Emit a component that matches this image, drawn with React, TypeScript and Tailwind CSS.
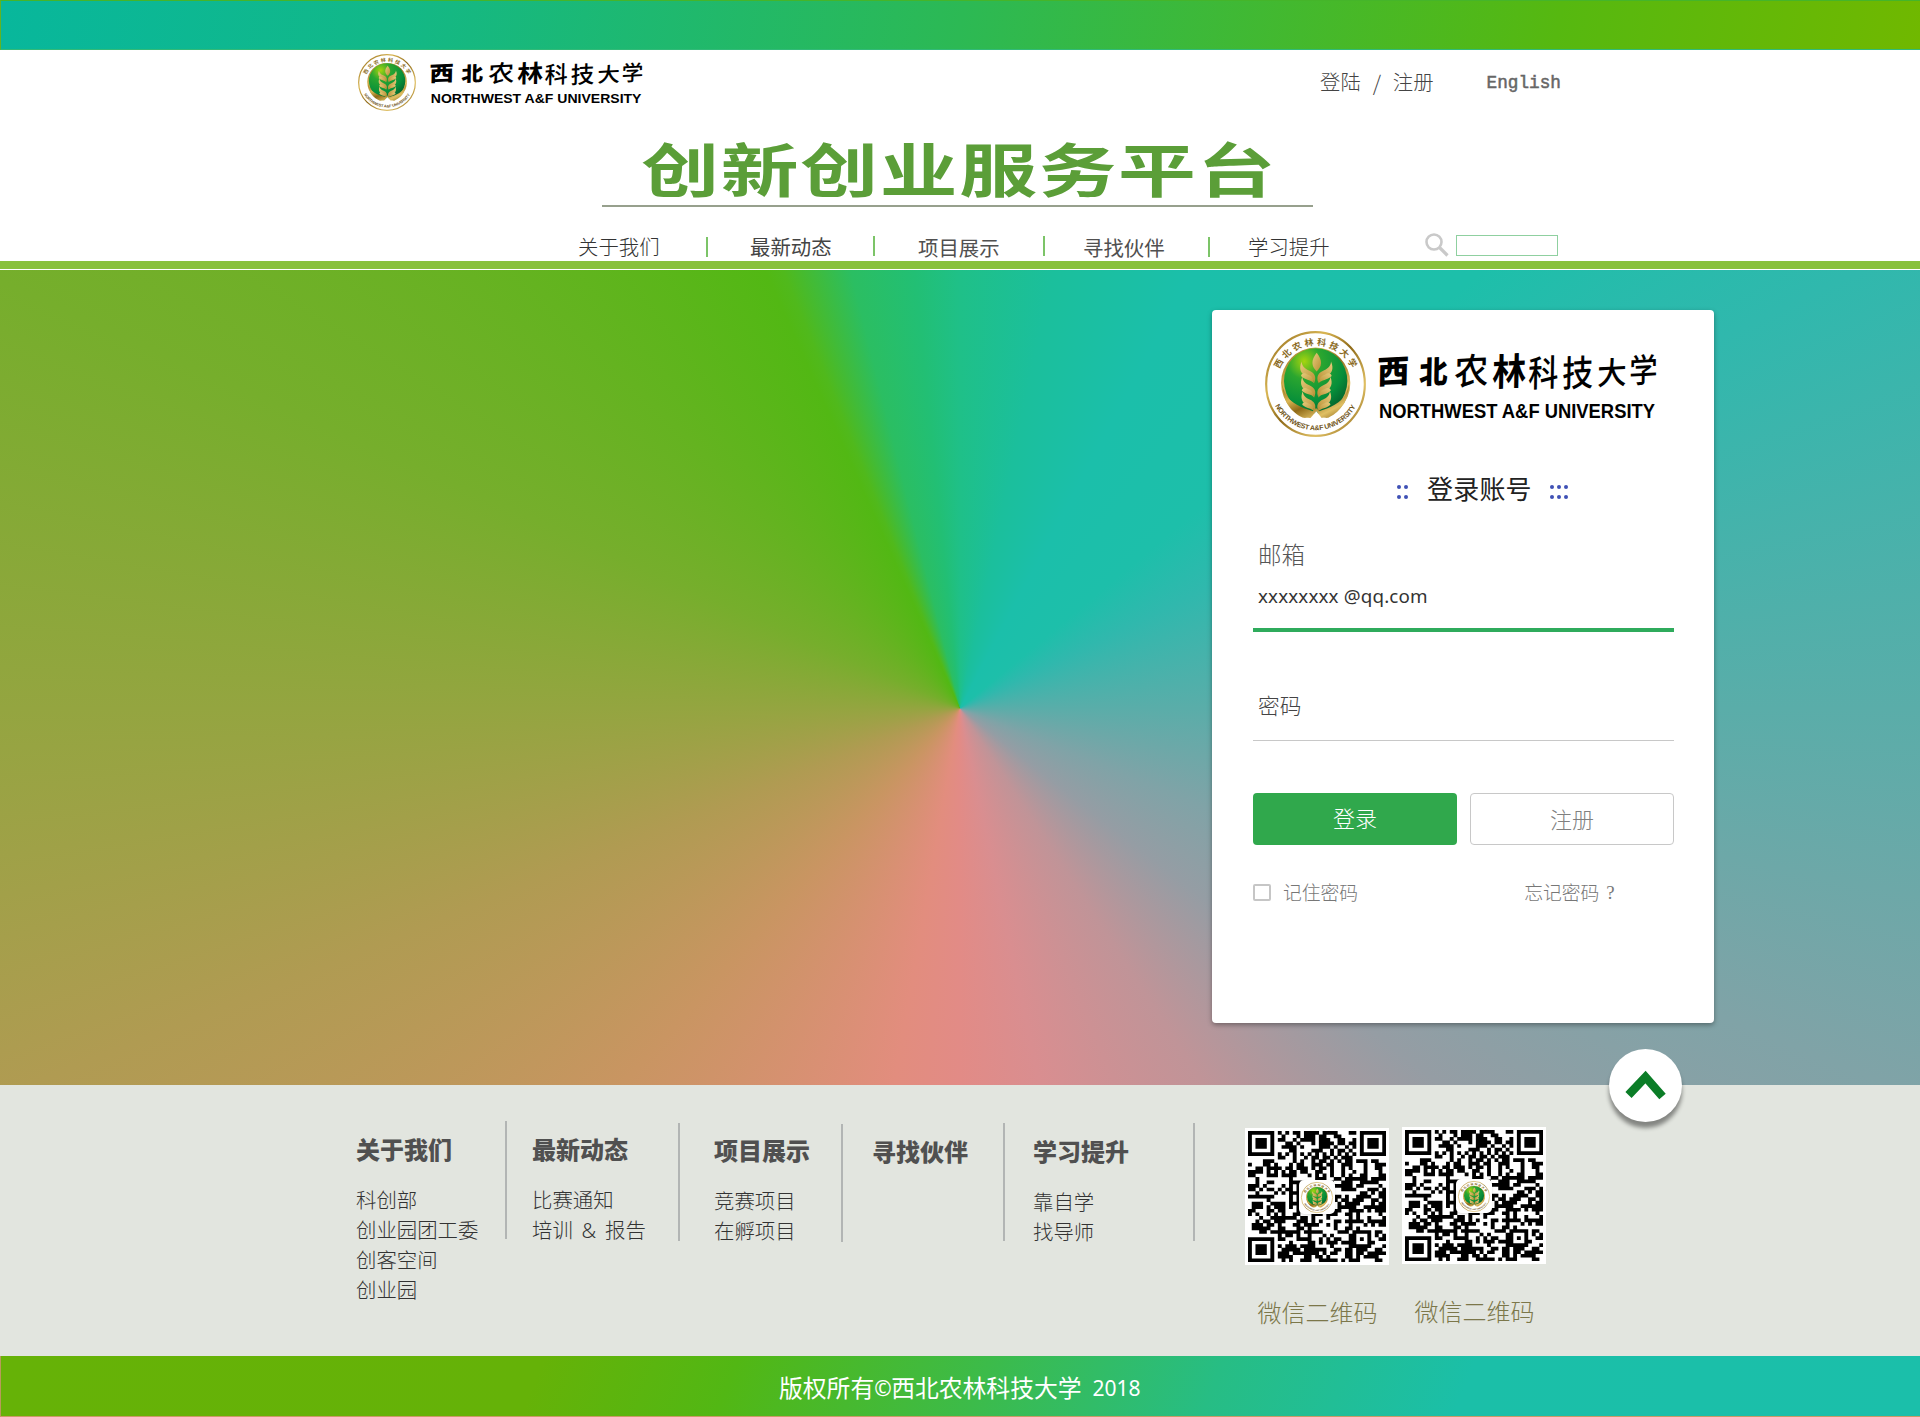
import React from "react";

const CJK = "font-['Noto_Sans','Noto_Sans_CJK_SC',sans-serif]";

/* ---------- Emblem ---------- */

function Leaf({ y, s }: { y: number; s: number }) {
  return (
    <g transform={`translate(168 ${y}) scale(${s})`}>
      <path d="M-44 0 C-54 22 -46 40 -28 44 C-14 47 -8 54 -7 66 C2 46 -6 34 -22 27 C-36 21 -44 12 -44 0Z" />
      <path d="M-46 44 C-44 34 -34 34 -26 40 C-12 44 -8 54 -7 66 C-16 54 -32 58 -46 44Z" />
    </g>
  );
}

function Emblem({ id, className }: { id: string; className: string }) {
  return (
    <svg className={`overflow-visible ${className}`} viewBox="14 20 303 320" preserveAspectRatio="none">
      <defs>
        <linearGradient id={`${id}-gold`} x1="0" y1="0" x2="1" y2="1">
          <stop offset="0" stopColor="#8a6414" />
          <stop offset="0.3" stopColor="#d9b654" />
          <stop offset="0.5" stopColor="#8f6a18" />
          <stop offset="0.75" stopColor="#e0c064" />
          <stop offset="1" stopColor="#80590d" />
        </linearGradient>
        <linearGradient id={`${id}-leaf`} x1="0" y1="0" x2="1" y2="1">
          <stop offset="0" stopColor="#e6cc7c" />
          <stop offset="1" stopColor="#b98e34" />
        </linearGradient>
        <radialGradient id={`${id}-green`} cx="0.32" cy="0.2" r="0.9">
          <stop offset="0" stopColor="#a5d40f" />
          <stop offset="0.3" stopColor="#2ba62f" />
          <stop offset="0.7" stopColor="#078f3a" />
          <stop offset="1" stopColor="#04592a" />
        </radialGradient>
        <path id={`${id}-top`} d="M57 136 A118 118 0 0 1 275 136" />
        <path id={`${id}-bottom`} d="M43 243 A138 140 0 0 0 289 243" />
      </defs>
      <ellipse cx="165.5" cy="180" rx="148" ry="156.500" fill="#fff" stroke={`url(#${id}-gold)`} strokeWidth="6.500" />
      <ellipse cx="166" cy="177" rx="104" ry="107" fill={`url(#${id}-gold)`} />
      <ellipse cx="166" cy="171" rx="95" ry="99" fill={`url(#${id}-green)`} />
      <path d="M66 180 C72 224 100 240 134 254 L158 262 C166 250 168 250 176 262 L200 254 C232 240 260 224 266 180 C264 240 232 268 204 282 C190 284 178 276 168 262 C158 276 146 284 128 282 C96 266 68 240 66 180Z" fill={`url(#${id}-gold)`} />
      <path d="M144 290 L168 262 L190 290Z" fill="#fff" />
      <g fill={`url(#${id}-leaf)`}>
        <path d="M169 86 C187 110 186 126 169 142 C152 126 152 108 169 86Z" />
        <Leaf y={112} s={1} />
        <Leaf y={158} s={0.95} />
        <Leaf y={202} s={0.92} />
        <g transform="translate(336 0) scale(-1 1)">
          <Leaf y={112} s={1} />
          <Leaf y={158} s={0.95} />
          <Leaf y={202} s={0.92} />
        </g>
      </g>
      <text className="font-['Noto_Sans_CJK_SC',sans-serif] font-bold" fontSize="27" fill="#8a6a22">
        <textPath href={`#${id}-top`} startOffset="1" textLength="274">西北农林科技大学</textPath>
      </text>
      <text className="font-['Liberation_Sans',sans-serif] font-bold" fontSize="21" fill="#6f5418">
        <textPath href={`#${id}-bottom`} startOffset="3" textLength="296">NORTHWEST A&amp;F UNIVERSITY</textPath>
      </text>
    </svg>
  );
}

/* ---------- University word mark ---------- */

function WordMark({ className }: { className: string }) {
  const chars: [string, number, number, number, number, number][] = [
    ["西", 0, 32, 32, 900, 1],
    ["北", 42, 32, 31, 900, 0.92],
    ["农", 77, 33, 36, 500, 0.95],
    ["林", 115, 34, 37, 700, 0.92],
    ["科", 151, 35, 36, 500, 0.84],
    ["技", 185, 35, 36, 500, 0.86],
    ["大", 220, 33, 31, 500, 0.95],
    ["学", 252, 31, 33, 500, 0.86],
  ];
  return (
    <svg className={`overflow-visible ${className}`} viewBox="0 0 279 70" preserveAspectRatio="none">
      <g className="font-['Noto_Sans_CJK_SC',sans-serif]" fill="#000">
        {chars.map(([c, x, y, size, weight, sx]) => (
          <text key={c} x={0} y={0} transform={`translate(${x - 1} ${y}) rotate(-3) skewX(-4) scale(${sx} 1)`} fontSize={size} fontWeight={weight}>
            {c}
          </text>
        ))}
      </g>
      <text x="1" y="66" className="font-['Liberation_Sans',sans-serif] font-bold" fontSize="20.500" textLength="276" lengthAdjust="spacingAndGlyphs">
        NORTHWEST A&amp;F UNIVERSITY
      </text>
    </svg>
  );
}

/* ---------- QR code ---------- */

const SIZE = 37;

function buildCode(): string {
  let seed = 20187;
  const rand = () => {
    seed = (seed * 1103515245 + 12345) % 2147483648;
    return seed / 2147483648;
  };
  const ring = (r: number, c: number, n: number) => {
    const d = Math.max(Math.abs(r), Math.abs(c));
    return d <= n ? (n === 3 ? d !== 2 : d !== 1) : false;
  };
  let d = "";
  for (let r = 0; r < SIZE; r++) {
    for (let c = 0; c < SIZE; c++) {
      let on = rand() < 0.53;
      if (r < 8 && c < 8) on = ring(r - 3, c - 3, 3);
      else if (r < 8 && c > 28) on = ring(r - 3, c - 33, 3);
      else if (r > 28 && c < 8) on = ring(r - 33, c - 3, 3);
      else if (Math.abs(r - 30) < 3 && Math.abs(c - 30) < 3) on = ring(r - 30, c - 30, 2);
      else if (r === 6) on = c % 2 === 0;
      else if (c === 6) on = r % 2 === 0;
      if (on) d += `M${c} ${r}h1.04v1.04h-1.04z`;
    }
  }
  return d;
}

const CODE = buildCode();

function QrCard({ id, className }: { id: string; className: string }) {
  return (
    <div className={`flex flex-col items-center ${className}`}>
      <div className="relative h-[137px] w-[144px] bg-white pt-[3px] pl-[3px]">
        <svg className="h-[131px] w-[138px]" viewBox="0 0 37 37" preserveAspectRatio="none">
          <path d={CODE} fill="#000" />
        </svg>
        <div className="absolute top-[52px] left-[54px] flex h-[34px] w-[36px] items-center justify-center rounded-[5px] bg-white shadow-sm">
          <Emblem id={id} className="h-[31px] w-[32px]" />
        </div>
      </div>
      <p className={`${CJK} mt-[31px] ml-px text-[24px] leading-[34px] font-light text-[#7c774a]`}>微信二维码</p>
    </div>
  );
}

/* ---------- Header ---------- */

const NAV = [
  { label: "关于我们", cls: "w-[128px]", sep: "mt-[5px]", weight: "font-light text-[#333]" },
  { label: "最新动态", cls: "w-[123px]", sep: "mt-[4px]", weight: "font-normal text-[#444]" },
  { label: "项目展示", cls: "w-[125px] pt-px", sep: "mt-[4px]", weight: "font-normal text-[#505050]" },
  { label: "寻找伙伴", cls: "w-[125px] pt-px", sep: "mt-[5px]", weight: "font-normal text-[#505050]" },
  { label: "学习提升", cls: "w-[100px]", sep: "", weight: "font-light text-[#333]" },
];

const NAV_GAPS = ["ml-[578px]", "ml-[42px]", "ml-[43px]", "ml-[38px]", "ml-[38px]"];

function Header() {
  return (
    <header className="flex h-[220px] flex-col bg-white">
      <div className="flex h-[77px] items-start">
        <Emblem id="head" className="mt-[4px] ml-[358px] h-[57px] w-[58px]" />
        <WordMark className="mt-[11px] ml-[14px] h-[45px] w-[213px]" />
        <div className={`${CJK} mt-[17px] ml-[677px] flex items-center text-[20.400px] leading-[30px] font-light text-[#444]`}>
          <a>登陆</a>
          <span className="mx-[10px] w-[12px] text-center font-['Noto_Sans_CJK_SC',sans-serif] text-[21px]">/</span>
          <a>注册</a>
        </div>
        <a className="mt-[18px] ml-[53px] font-['Liberation_Mono',monospace] text-[17.700px] leading-[30px] text-[#666] [-webkit-text-stroke:0.5px_#666]">English</a>
      </div>
      <div className="ml-[602px] flex h-[80px] w-[711px] justify-center border-b-2 border-[#97a08d]">
        <h1 className="-mt-px ml-[4px] origin-center scale-x-[1.34] text-center font-['Noto_Sans_CJK_SC',sans-serif] text-[58px] leading-[82px] font-bold whitespace-nowrap text-[#5b9e38] tracking-[1.300px]">
          创新创业服务平台
        </h1>
      </div>
      <nav className="flex h-[54px] items-start pt-[25px]">
        {NAV.map((n, i) => (
          <React.Fragment key={n.label}>
            <div className={`flex items-center ${NAV_GAPS[i]} ${n.cls}`}>
              <a className={`${CJK} text-[20.400px] leading-[30px] ${n.weight}`}>{n.label}</a>
            </div>
            {n.sep && <i className={`h-[20px] w-[2px] bg-[#7cc468] ${n.sep}`} />}
          </React.Fragment>
        ))}
        <svg className="mt-px ml-[77px] h-[24px] w-[24px]" viewBox="0 0 24 24" fill="none" stroke="#c9c9c9">
          <circle cx="9" cy="9" r="7.500" strokeWidth="2.600" />
          <path d="M14.500 14.500L22.500 22.500" strokeWidth="3.200" />
        </svg>
        <input className="mt-[3px] ml-[7px] h-[21px] w-[102px] border border-[#8fd0a0] bg-white outline-none" />
      </nav>
      <div className="h-[8px] bg-[#89c13c]" />
      <div className="h-px bg-white" />
    </header>
  );
}

/* ---------- Login card ---------- */

function Dots({ cols, className }: { cols: number; className: string }) {
  return (
    <span className={`grid gap-x-[3px] gap-y-[6px] ${cols === 2 ? "grid-cols-2" : "grid-cols-3"} ${className}`}>
      {Array.from({ length: cols * 2 }, (_, i) => (
        <i key={i} className="h-[4px] w-[4px] rounded-full bg-[#3f51b5]" />
      ))}
    </span>
  );
}

function LoginCard() {
  return (
    <section className="flex h-[713px] w-[502px] flex-col rounded-[4px] bg-white pr-[40px] pb-4 pl-[41px] shadow-[0_2px_5px_rgba(0,0,0,0.35)]">
      <div className="mt-[21px] ml-[12px] flex">
        <Emblem id="card" className="h-[106px] w-[101px]" />
        <WordMark className="mt-[21px] ml-[12px] h-[70px] w-[279px]" />
      </div>
      <div className="mt-[33px] ml-[144px] flex h-[38px] items-center">
        <Dots cols={2} className="mt-[6px] w-[11px]" />
        <h2 className={`${CJK} mr-[18px] ml-[19px] text-[26px] leading-[38px] tracking-[0.200px] text-[#222]`}>登录账号</h2>
        <Dots cols={3} className="mt-[6px] w-[18px]" />
      </div>
      <label className={`${CJK} mt-[30px] ml-[5px] text-[23.500px] leading-[34px] font-light text-[#555]`}>邮箱</label>
      <div className="mt-[11px] flex h-[49px] items-start border-b-4 border-[#2fab5c] pl-[5px]">
        <span className="font-['Noto_Sans',sans-serif] text-[18.800px] leading-[26px] tracking-[0.150px] text-[#333]">xxxxxxxx @qq.com</span>
      </div>
      <div className="mt-[58px] flex h-[51px] items-start border-b border-[#c8c8c8] pl-[5px]">
        <span className={`${CJK} text-[21.700px] leading-[32px] font-light text-[#444]`}>密码</span>
      </div>
      <div className={`${CJK} mt-[52px] flex gap-[13px] text-[22px] font-light`}>
        <button className="h-[52px] w-[204px] rounded-[4px] bg-[#30a84c] pb-px text-white">登录</button>
        <button className="h-[52px] w-[204px] rounded-[4px] border border-[#c8c8c8] text-[#808080]">注册</button>
      </div>
      <div className={`${CJK} mt-[34px] flex items-center text-[18.800px] leading-[28px] font-light text-[#777]`}>
        <i className="-mt-[2px] h-[17px] w-[18px] rounded-[2px] border-2 border-[#c6c6c6]" />
        <span className="ml-[12px]">记住密码</span>
        <span className="ml-[166px]">忘记密码</span>
        <span className="ml-[7px] font-['Liberation_Serif',serif] font-normal">?</span>
      </div>
    </section>
  );
}

/* ---------- Footer ---------- */

const COLUMNS = [
  { title: "关于我们", items: ["科创部", "创业园团工委", "创客空间", "创业园"], cls: "w-[149px] pt-[50px]", sep: "mt-[36px]", gap: "ml-[356px]" },
  { title: "最新动态", items: ["比赛通知", "培训 & 报告"], cls: "w-[146px] pt-[50px]", sep: "mt-[38px]", gap: "ml-[25px]" },
  { title: "项目展示", items: ["竞赛项目", "在孵项目"], cls: "w-[127px] pt-[51px]", sep: "mt-[39px]", gap: "ml-[34px]" },
  { title: "寻找伙伴", items: [], cls: "w-[131px] pt-[52px]", sep: "mt-[38px]", gap: "ml-[29px]" },
  { title: "学习提升", items: ["靠自学", "找导师"], cls: "w-[160px] pt-[52px]", sep: "mt-[38px]", gap: "ml-[28px]" },
];

function Footer() {
  return (
    <footer className="relative h-[271px] bg-[#e2e5df]">
      <button className="absolute -top-[36px] left-[1609px] flex h-[73px] w-[73px] items-center justify-center rounded-full bg-white shadow-[0_6px_4px_rgba(0,0,0,0.42)]">
        <svg className="-mt-px h-[30px] w-[42px]" viewBox="0 0 42 30" fill="none" stroke="#0b7d27" strokeWidth="8.500">
          <path d="M3.500 25L20.500 7L37.500 26.500" />
        </svg>
      </button>
      <div className="flex items-start">
        {COLUMNS.map((c) => (
          <React.Fragment key={c.title}>
            <div className={`${CJK} ${c.gap} ${c.cls} shrink-0 whitespace-nowrap`}>
              <h3 className="text-[24px] leading-[30px] font-black text-[#505050]">{c.title}</h3>
              <ul className="mt-[20px] text-[20.400px] leading-[30px] font-light text-[#333]">
                {c.items.map((t) => (
                  <li key={t} className="[word-spacing:3.5px]">{t}</li>
                ))}
              </ul>
            </div>
            <i className={`h-[118px] w-[2px] shrink-0 bg-[#b2b5b4] ${c.sep}`} />
          </React.Fragment>
        ))}
        <QrCard id="qra" className="mt-[43px] ml-[50px]" />
        <QrCard id="qrb" className="mt-[42px] ml-[13px]" />
      </div>
    </footer>
  );
}

export default function App() {
  return (
    <div className="w-[1920px] overflow-hidden bg-white">
      <div className="h-[50px] border border-r-0 border-t-[#45b52a] border-b-[#32ba78] border-l-[#62b322] bg-[linear-gradient(100deg,#08b79c_0%,#12b888_20%,#2cb954_50%,#56b810_81%,#70b800_100%)]" />
      <Header />
      <main className="flex h-[815px] items-start bg-[conic-gradient(from_0deg_at_960px_438.5px,#1fc088_0deg,#1bbf9c_12deg,#1bbfaa_28deg,#1dbfaa_50deg,#30b8ad_64deg,#5aada9_90deg,#80a3a7_112deg,#959da4_128deg,#c09498_147deg,#d98e90_168deg,#e28b86_180deg,#e28d7e_190deg,#c99562_222deg,#b09b52_248deg,#94a540_270deg,#76ae2c_294deg,#52b814_336deg,#50b91c_338deg,#2bbe62_346deg,#22bf74_354deg,#1fc088_360deg)] pt-[40px] pl-[1212px]">
        <LoginCard />
      </main>
      <Footer />
      <div className="h-[61px] border-b border-l border-b-[#cb9a66] border-l-[#b89a5a] bg-[linear-gradient(112deg,#66b207_0%,#65b208_28%,#52b714_38%,#3cbb4a_51%,#27bd84_63%,#1bbfa8_76%,#1bbfaa_100%)]">
        <p className={`${CJK} ml-[778px] flex pt-[15px] text-[23.800px] leading-[34px] text-white`}>
          版权所有<span className="w-[17px] text-[21px]">©</span>西北农林科技大学<span className="ml-[11px] text-[21px]">2018</span>
        </p>
      </div>
    </div>
  );
}
